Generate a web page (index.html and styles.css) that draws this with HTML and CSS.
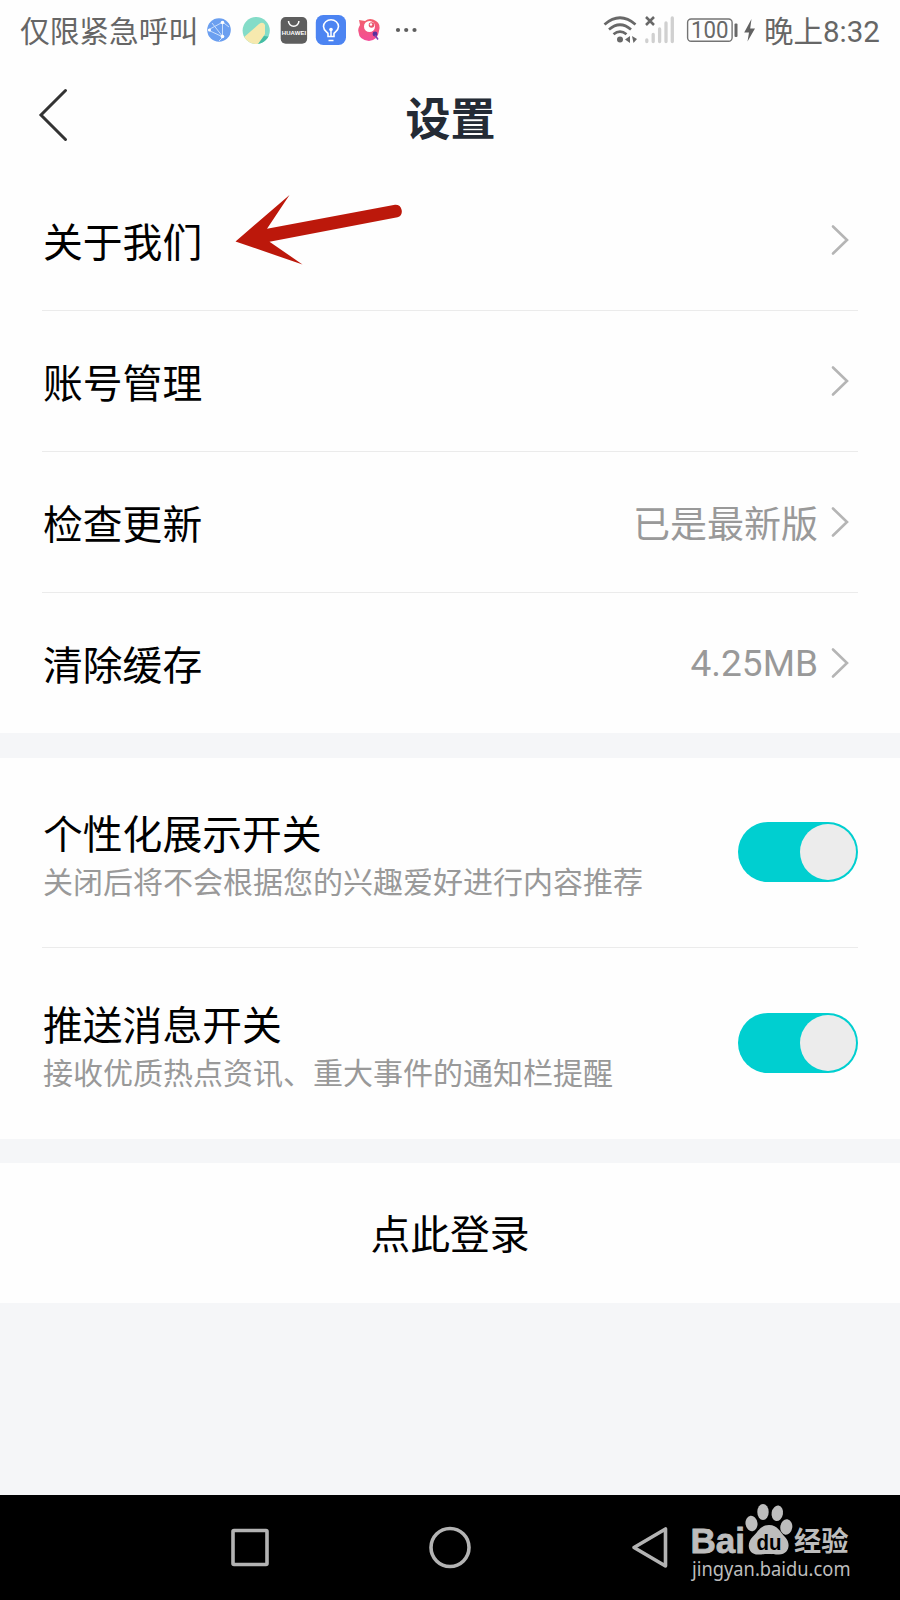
FILE: index.html
```html
<!DOCTYPE html>
<html lang="zh-CN">
<head>
    <meta charset="UTF-8">
    <meta name="viewport" content="width=device-width, initial-scale=1.0">
    <title>设置</title>
    <link rel="stylesheet" href="styles.css">
</head>
<body>

    <div class="status-bar">
        <span class="carrier">仅限紧急呼叫</span>
        <!-- notification icons -->
        <svg class="notices" width="216" height="60" viewBox="204 0 216 60">
            <circle cx="219" cy="30" r="11.8" fill="#6b9ff0"/>
            <path d="M208 30 L223 22 M208 30 L223 37 M222.500 22 V37 M222.500 22 L229 27 M223 37 L219 41 M212 23 L223 37" fill="none" stroke="#c9defc" stroke-width="1"/>
            <circle cx="222.500" cy="22.500" r="1.800" fill="#fff"/>
            <circle cx="222.500" cy="36.500" r="1.800" fill="#fff"/>
            <circle cx="209.500" cy="30" r="1.500" fill="#fff"/>

            <clipPath id="leaf"><circle cx="256.200" cy="30.500" r="13.600"/></clipPath>
            <g clip-path="url(#leaf)">
                <rect x="242" y="16" width="29" height="29" fill="#84dcc8"/>
                <path d="M243 38 L259 24 Q263 21 265 25 L265 34 L257 46 L246 44 Z" fill="#f6e9ae"/>
                <path d="M258 44 L264 36 L271 37 L268 46 Z" fill="#45bda4"/>
            </g>

            <rect x="280.700" y="17" width="26.400" height="26.700" rx="5" fill="#5e5e5e"/>
            <path d="M288.500 21 a5.200 5.200 0 0 0 10.400 0" fill="none" stroke="#fff" stroke-width="1.500"/>
            <text class="huawei" x="281.700" y="35" textLength="24.500" lengthAdjust="spacing">HUAWEI</text>

            <rect x="315.800" y="15" width="30.200" height="30" rx="7.500" fill="#4c84f2"/>
            <path d="M328 36.500 v-3 c-1-1.500 -4.500-3 -4.500-7 a7.500 6.700 0 0 1 15 0 c0 4 -3.500 5.500 -4.500 7 v3 z" fill="none" stroke="#fff" stroke-width="1.600"/>
            <path d="M331 30 v6 M328.500 40.500 h5" stroke="#fff" stroke-width="1.500"/>
            <circle cx="331" cy="29.500" r="1.800" fill="#fff"/>

            <linearGradient id="pink" x1="0" y1="0" x2="0" y2="1">
                <stop offset="0" stop-color="#f2606c"/>
                <stop offset="1" stop-color="#f44b99"/>
            </linearGradient>
            <path d="M359 20 L365 21 Q370 17 376 21 Q381 24 379 31 Q378 40 369 41 Q359 40 358.500 32 Q357.500 29 360 25 Z" fill="url(#pink)"/>
            <circle cx="369.500" cy="26.500" r="5.500" fill="#fff"/>
            <circle cx="371.500" cy="25" r="2.800" fill="#e9566d"/>
            <circle cx="371" cy="24.500" r="1.200" fill="#fff"/>
            <circle cx="375" cy="34" r="2.400" fill="#57309c"/>
            <path d="M375 35 L378 39.500" stroke="#8041b0" stroke-width="1.500"/>

            <g fill="#5e5e5e">
                <circle cx="398" cy="30" r="2.100"/>
                <circle cx="406.200" cy="30" r="2.100"/>
                <circle cx="414.500" cy="30" r="2.100"/>
            </g>
        </svg>

        <!-- wifi, signal, battery, charging -->
        <svg class="system" width="154" height="60" viewBox="602 0 154 60">
            <g fill="none" stroke="#686868" stroke-width="2.700">
                <path d="M604.500 24.500 Q620 11 635.500 24.500"/>
                <path d="M609 29.500 Q620 20 631 29.500"/>
                <path d="M613.500 34.300 Q620 29 626.500 34.300"/>
            </g>
            <circle cx="620" cy="39.500" r="3" fill="#686868"/>
            <path d="M630 36 V43 L625 39.500 Z M632 36 L637 39 L633.500 43 Z" fill="#686868"/>
            <path d="M646 17 L654 25 M654 17 L646 25" stroke="#686868" stroke-width="2.500"/>
            <g stroke="#d0d0d0" stroke-width="3.300" stroke-linecap="round">
                <path d="M646.800 40 V41.500 M653.200 34.500 V41.500 M659.600 29 V41.500 M666 23 V41.500 M672.300 18 V41.500"/>
            </g>
            <rect x="687.600" y="19" width="44.500" height="22.300" rx="3.500" fill="none" stroke="#747474" stroke-width="1.400"/>
            <rect x="734.500" y="23.500" width="3" height="13.500" rx="1" fill="#686868"/>
            <text class="battery" x="691" y="38.200" textLength="37.500" lengthAdjust="spacingAndGlyphs">100</text>
            <path d="M751.500 19 L744.200 32.500 H749 L747.500 41.500 L755 28.500 H750.200 Z" fill="#626262"/>
        </svg>
        <span class="clock">晚上8:32</span>
    </div>

    <div class="header">
        <svg class="back" width="32" height="54" viewBox="0 0 32 54">
            <path d="M28.500 2.500 L4 27 L28.500 51.500" fill="none" stroke="#333" stroke-width="3" stroke-linecap="round"/>
        </svg>
        <h1>设置</h1>
    </div>

    <div class="group">
        <div class="row">
            <span class="label">关于我们</span>
            <svg class="pointer" width="168" height="72" viewBox="235 194 168 72">
                <path d="M235.500 241.500 L289.500 195 L267 228.700 L395 204.700 A6.500 6.500 0 0 1 397.500 217.300 L269.500 241.700 L302.500 264.500 Z" fill="#bc180b"/>
            </svg>
            <svg class="chevron" width="18" height="32" viewBox="0 0 18 32"><path d="M2 2.500 L16 16 L2 29.500"/></svg>
        </div>
        <div class="row">
            <span class="label">账号管理</span>
            <svg class="chevron" width="18" height="32" viewBox="0 0 18 32"><path d="M2 2.500 L16 16 L2 29.500"/></svg>
        </div>
        <div class="row">
            <span class="label">检查更新</span>
            <span class="value">已是最新版</span>
            <svg class="chevron" width="18" height="32" viewBox="0 0 18 32"><path d="M2 2.500 L16 16 L2 29.500"/></svg>
        </div>
        <div class="row">
            <span class="label">清除缓存</span>
            <span class="value size">4.25MB</span>
            <svg class="chevron" width="18" height="32" viewBox="0 0 18 32"><path d="M2 2.500 L16 16 L2 29.500"/></svg>
        </div>
    </div>

    <div class="group">
        <div class="row tall">
            <div class="texts">
                <span class="label">个性化展示开关</span>
                <span class="desc">关闭后将不会根据您的兴趣爱好进行内容推荐</span>
            </div>
            <div class="switch"><div class="knob"></div></div>
        </div>
        <div class="row tall">
            <div class="texts">
                <span class="label">推送消息开关</span>
                <span class="desc">接收优质热点资讯、重大事件的通知栏提醒</span>
            </div>
            <div class="switch"><div class="knob"></div></div>
        </div>
    </div>

    <div class="group login">点此登录</div>

    <div class="nav-bar">
        <svg width="900" height="105" viewBox="0 1495 900 105">
            <g fill="none" stroke="#b3b3b3" stroke-width="3.600" stroke-linejoin="round">
                <rect x="233" y="1530.500" width="34" height="34" rx="1"/>
                <circle cx="450" cy="1547.500" r="19"/>
                <path d="M634 1547.500 L665.500 1529 V1566 Z"/>
            </g>
            <!-- Baidu Jingyan logo -->
            <g fill="#bdbdbd">
                <text class="bai" x="690.500" y="1553" textLength="54.500" lengthAdjust="spacingAndGlyphs">Bai</text>
                <ellipse cx="751.500" cy="1523.500" rx="6" ry="7.800" transform="rotate(-8 751.500 1523.500)"/>
                <ellipse cx="763" cy="1512" rx="5.700" ry="8"/>
                <ellipse cx="777.300" cy="1513.300" rx="5.700" ry="7.800" transform="rotate(10 777.300 1513.300)"/>
                <ellipse cx="786.300" cy="1527" rx="6" ry="7.700" transform="rotate(8 786.300 1527)"/>
                <path d="M769 1525 C778 1525 780 1532 785 1537 C791.500 1543.500 789 1554.500 779 1554.500 C774 1554.500 773 1554 768.500 1554 C764 1554 762 1554.500 758 1554.500 C748 1554.500 746 1543.500 752.500 1537 C758 1532 760 1525 769 1525 Z"/>
                <text class="du" x="756.500" y="1550" textLength="25" lengthAdjust="spacingAndGlyphs">du</text>
                <text class="jingyan" x="794" y="1551" textLength="54.500" lengthAdjust="spacingAndGlyphs">经验</text>
                <text class="site" x="692" y="1575.500" textLength="158.500" lengthAdjust="spacingAndGlyphs">jingyan.baidu.com</text>
            </g>
        </svg>
    </div>

</body>
</html>
```
FILE: styles.css
```css
* {
    box-sizing: border-box;
}
body {
    margin: 0;
    width: 900px;
    height: 1600px;
    display: flex;
    flex-direction: column;
    background-color: #f5f6f8;
    font-family: Roboto, "Noto Sans CJK SC", sans-serif;
    color: #000;
    overflow: hidden;
}
svg {
    display: block;
    flex: none;
}
.status-bar {
    display: flex;
    align-items: center;
    height: 60px;
    padding: 0 20px;
    background-color: #fefefe;
    color: #666;
    white-space: nowrap;
}
.carrier {
    width: 184px;
    padding-top: 4px;
    font-size: 29.7px;
    line-height: 56px;
}
.system {
    margin-left: auto;
}
.clock {
    width: 116px;
    margin-left: 8px;
    padding-top: 4px;
    font-size: 29.5px;
    line-height: 56px;
}
.huawei {
    font-family: "Liberation Sans", sans-serif;
    font-size: 6px;
    font-weight: bold;
    fill: #fff;
}
.battery {
    font-size: 23px;
    fill: #686868;
}
.header {
    display: grid;
    grid-template-columns: 100px 1fr 100px;
    align-items: center;
    height: 110px;
    background-color: #fefefe;
}
.back {
    margin-left: 37px;
}
h1 {
    padding: 11px 0 0 1px;
    margin: 0;
    font-size: 45px;
    line-height: 60px;
    text-align: center;
    color: #242b35;
}
.group {
    margin-bottom: 24.5px;
    background-color: #fefefe;
}
.row {
    display: flex;
    align-items: center;
    height: 141px;
    margin: 0 42px;
    padding-right: 9px;
    border-bottom: 1.5px solid #ebebeb;
}
.row:last-child {
    height: 140px;
    border-bottom: none;
}
.label {
    padding: 7px 0 0 1px;
    font-size: 39.8px;
    line-height: 48px;
}
.pointer {
    margin: -20px 0 0 33px;
}
.value {
    margin-left: auto;
    padding-top: 7px;
    font-size: 37px;
    line-height: 48px;
    color: #999;
}
.size {
    padding-top: 1px;
}
.chevron {
    margin-left: auto;
}
.chevron path {
    fill: none;
    stroke: #b5b5b5;
    stroke-width: 2.6;
    stroke-linecap: round;
}
.value + .chevron {
    margin-left: 13px;
}
.tall,
.tall:last-child {
    height: 190.5px;
    padding-right: 0;
}
.texts {
    display: flex;
    flex-direction: column;
    padding-top: 6px;
}
.desc {
    padding-left: 1px;
    font-size: 30px;
    line-height: 46px;
    color: #999;
}
.switch {
    display: flex;
    justify-content: flex-end;
    width: 120px;
    height: 60px;
    margin-left: auto;
    padding: 2px;
    border-radius: 30px;
    background-color: #00cfd0;
}
.knob {
    width: 56px;
    height: 56px;
    border-radius: 50%;
    background-color: #ececec;
}
.login {
    height: 140px;
    margin-bottom: 0;
    font-size: 39.8px;
    line-height: 146px;
    text-align: center;
}
.nav-bar {
    height: 105px;
    margin-top: auto;
    background-color: #000;
}
.bai {
    font-family: "Liberation Sans", sans-serif;
    font-size: 35px;
    font-weight: bold;
    stroke: #bdbdbd;
    stroke-width: 0.8;
}
.du {
    font-family: "Liberation Sans", sans-serif;
    font-size: 22px;
    font-weight: bold;
    fill: #000;
}
.jingyan {
    font-size: 27px;
    font-weight: bold;
}
.site {
    font-family: "Noto Sans", sans-serif;
    font-size: 20px;
}
```
